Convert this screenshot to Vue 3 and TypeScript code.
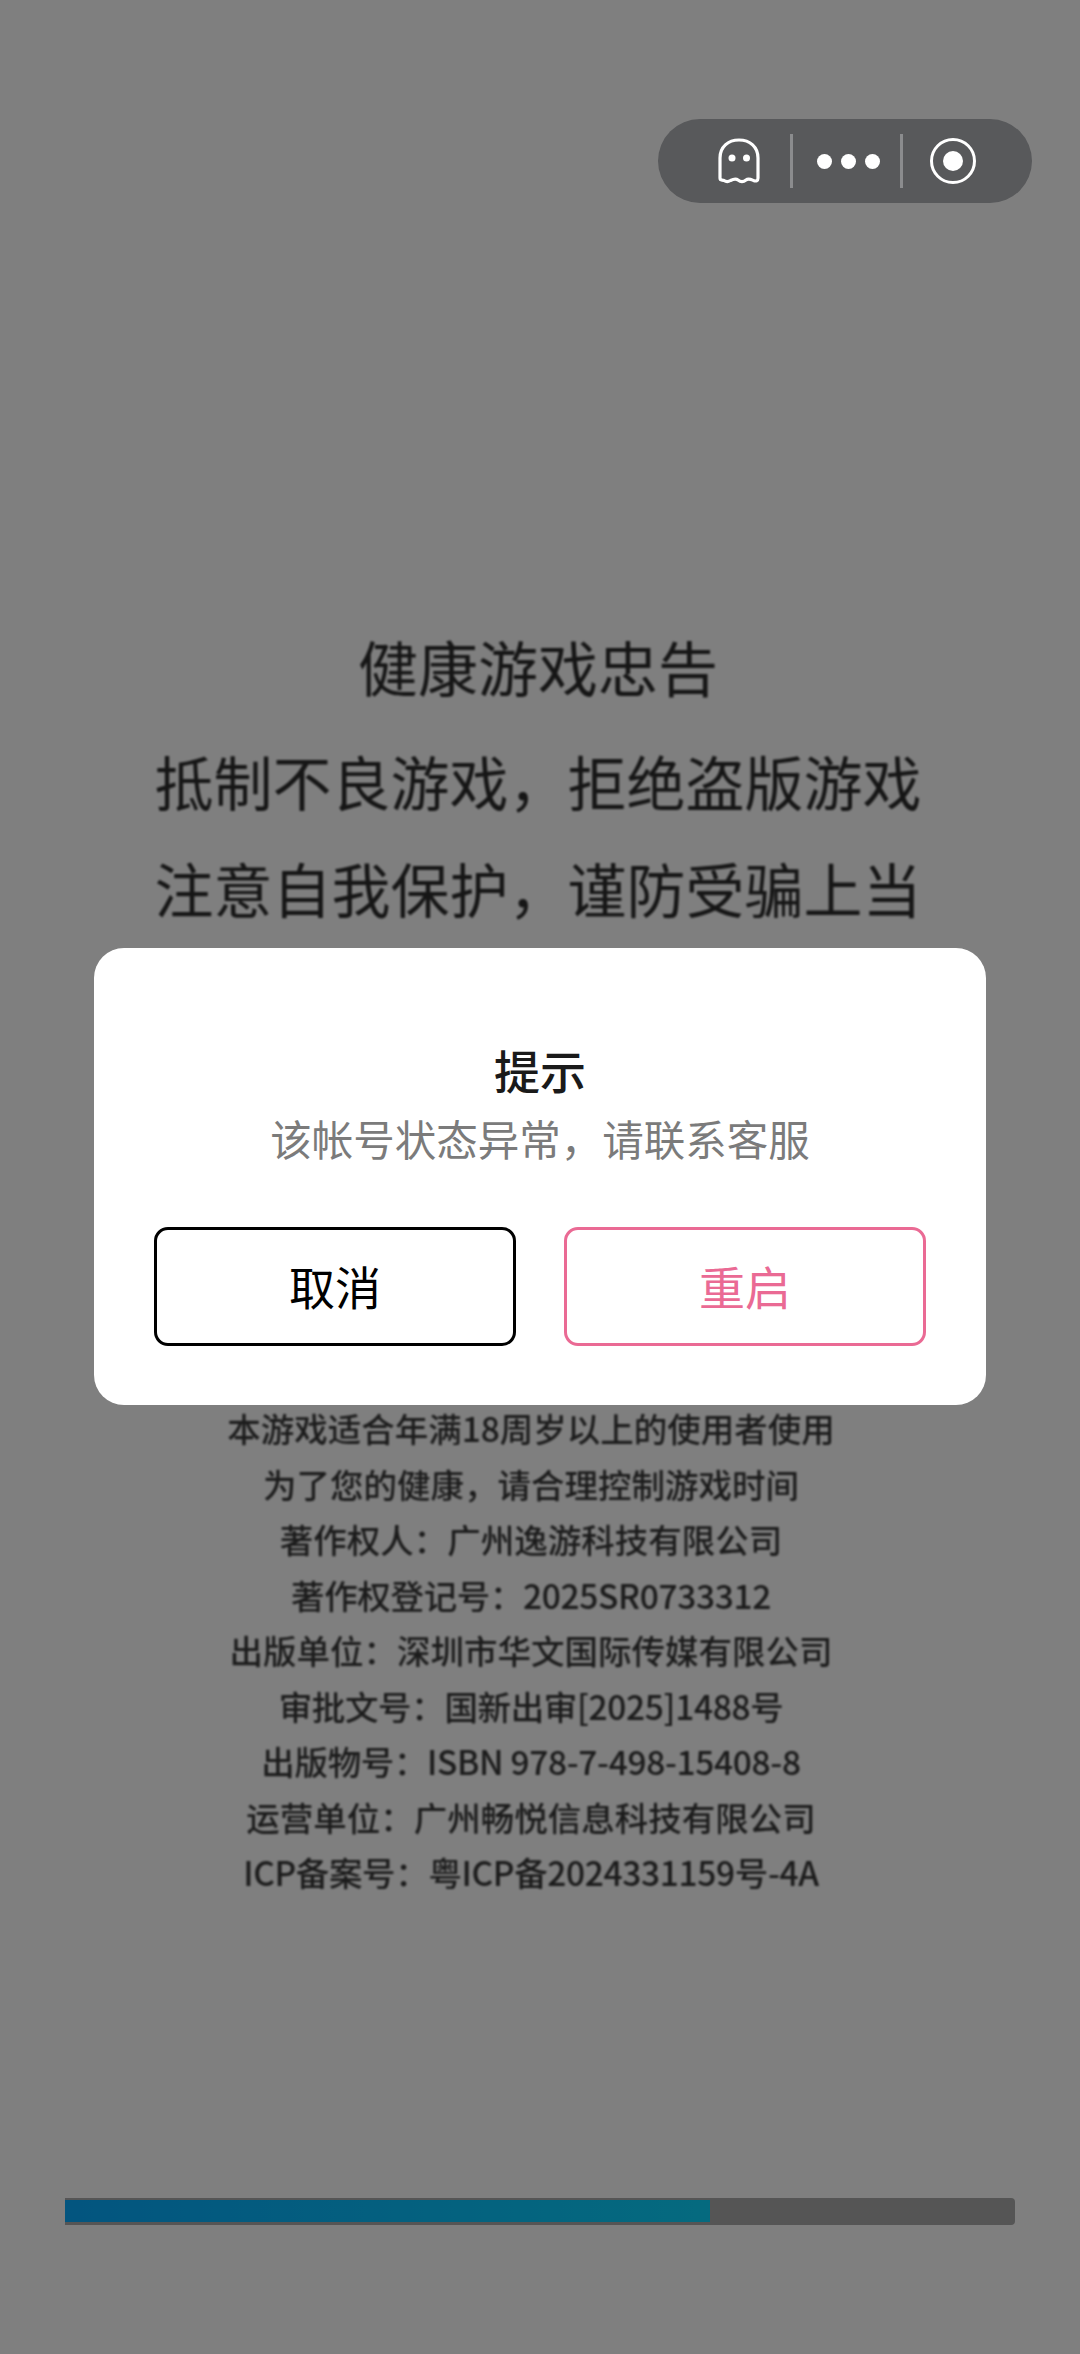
<script setup lang="ts">
interface InfoLine { text: string; tight: boolean }
const warnings: string[] = ['抵制不良游戏，拒绝盗版游戏', '注意自我保护，谨防受骗上当']
const infoLines: InfoLine[] = [
  { text: '本游戏适合年满18周岁以上的使用者使用', tight: false },
  { text: '为了您的健康，请合理控制游戏时间', tight: false },
  { text: '著作权人：广州逸游科技有限公司', tight: false },
  { text: '著作权登记号：2025SR0733312', tight: true },
  { text: '出版单位：深圳市华文国际传媒有限公司', tight: false },
  { text: '审批文号：国新出审[2025]1488号', tight: true },
  { text: '出版物号：ISBN 978-7-498-15408-8', tight: true },
  { text: '运营单位：广州畅悦信息科技有限公司', tight: false },
  { text: 'ICP备案号：粤ICP备2024331159号-4A', tight: true },
]
const progress = 67.9
</script>

<template>
  <div class="page">
    <main class="loading">
      <section class="notice">
        <h1 class="notice-title">健康游戏忠告</h1>
        <p v-for="line in warnings" :key="line" class="notice-line">{{ line }}</p>
      </section>
      <section class="info">
        <p v-for="line in infoLines" :key="line.text" class="info-line" :class="{ tight: line.tight }">{{ line.text }}</p>
      </section>
      <div class="track">
        <div class="fill" :style="{ width: progress + '%' }"></div>
      </div>
    </main>

    <div class="mask"></div>

    <div class="capsule">
      <svg class="ghost" viewBox="0 0 44 48" width="44" height="48" fill="none">
        <path d="M3 41V21C3 10 11 3 22 3s19 7 19 18v20c0 3-2 3.500-4.500 2.500c-3-1.300-5-2.500-7.500-.5c-2.500 2-5.500 2-8 0c-2.500-2-5-.8-7.500.5C11 45 8.500 44.500 7 43.500C5 42.500 3 44 3 41Z" stroke="#fff" stroke-width="3.200" stroke-linejoin="round" />
        <circle cx="15" cy="21" r="3.500" fill="#fff" />
        <circle cx="29.500" cy="21" r="3.500" fill="#fff" />
      </svg>
      <span class="divider"></span>
      <span class="dots"><i></i><i></i><i></i></span>
      <span class="divider"></span>
      <span class="target"><i></i></span>
    </div>

    <div class="dialog">
      <h2 class="dialog-title">提示</h2>
      <p class="dialog-text">该帐号状态异常，请联系客服</p>
      <div class="actions">
        <button class="btn cancel" type="button">取消</button>
        <button class="btn restart" type="button">重启</button>
      </div>
    </div>
  </div>
</template>

<style>
html, body { margin: 0; background: #808080; }
</style>

<style scoped>
.page {
  position: relative;
  width: 1080px;
  height: 2354px;
  overflow: hidden;
  background: #fff;
  font-family: "Noto Sans CJK SC", "Noto Sans", sans-serif;
}
.loading {
  display: flex;
  flex-direction: column;
  align-items: center;
  height: 100%;
  box-sizing: border-box;
  padding-top: 612px;
}
.notice { margin-right: 4px; text-align: center; color: #2c2c2c; filter: blur(0.8px); }
.notice-title { margin: 0 0 8px; font-size: 60px; font-weight: 400; line-height: 107px; }
.notice-line { margin: 0; font-size: 59px; font-weight: 400; line-height: 107px; }
.info { margin-top: 459px; margin-right: 18px; text-align: center; color: #383838; filter: blur(1px); }
.info-line { margin: 0; font-size: 33.500px; font-weight: 500; line-height: 55.500px; white-space: nowrap; }
.info-line.tight { letter-spacing: -0.35px; }
.track {
  margin-top: 298px;
  width: 950px;
  height: 27px;
  background: #aaa;
  border-radius: 0 4px 4px 0;
  display: flex;
  align-items: center;
}
.fill {
  height: 22px;
  background: linear-gradient(90deg, #06aaff, #0ad5ff);
}
.mask {
  position: absolute;
  inset: 0;
  background: rgba(0, 0, 0, 0.5);
}
.capsule {
  position: absolute;
  left: 658px;
  top: 119px;
  width: 374px;
  height: 84px;
  box-sizing: border-box;
  padding-left: 59px;
  border-radius: 42px;
  background: #58595b;
  display: flex;
  align-items: center;
}
.ghost { flex: none; }
.divider {
  flex: none;
  width: 3px;
  height: 54px;
  margin-left: 29px;
  background: #8b8c8e;
}
.dots {
  display: flex;
  gap: 9px;
  margin-left: 24px;
  margin-right: -9px;
}
.dots i {
  width: 15px;
  height: 15px;
  border-radius: 50%;
  background: #fff;
}
.target {
  width: 46px;
  height: 46px;
  margin-left: 27px;
  box-sizing: border-box;
  border: 3.500px solid #fff;
  border-radius: 50%;
  display: flex;
  align-items: center;
  justify-content: center;
}
.target i {
  width: 20px;
  height: 20px;
  border-radius: 50%;
  background: #fff;
}
.dialog {
  position: absolute;
  left: 94px;
  top: 948px;
  width: 892px;
  height: 457px;
  box-sizing: border-box;
  padding: 87px 60px 0;
  background: #fff;
  border-radius: 30px;
  text-align: center;
}
.dialog-title {
  margin: 0;
  font-size: 46px;
  font-weight: 500;
  line-height: 68px;
  color: #1a1a1a;
}
.dialog-text {
  margin: 0;
  font-size: 41.500px;
  line-height: 71px;
  color: #7b7b7b;
}
.actions {
  display: flex;
  justify-content: space-between;
  margin-top: 53px;
}
.btn {
  width: 362px;
  height: 119px;
  box-sizing: border-box;
  background: #fff;
  border-radius: 14px;
  font-family: inherit;
  font-size: 46px;
  padding: 0 0 3px;
}
.cancel { border: 3px solid #000; color: #000; }
.restart { border: 3px solid #ea6a94; color: #ea6a94; }
</style>
